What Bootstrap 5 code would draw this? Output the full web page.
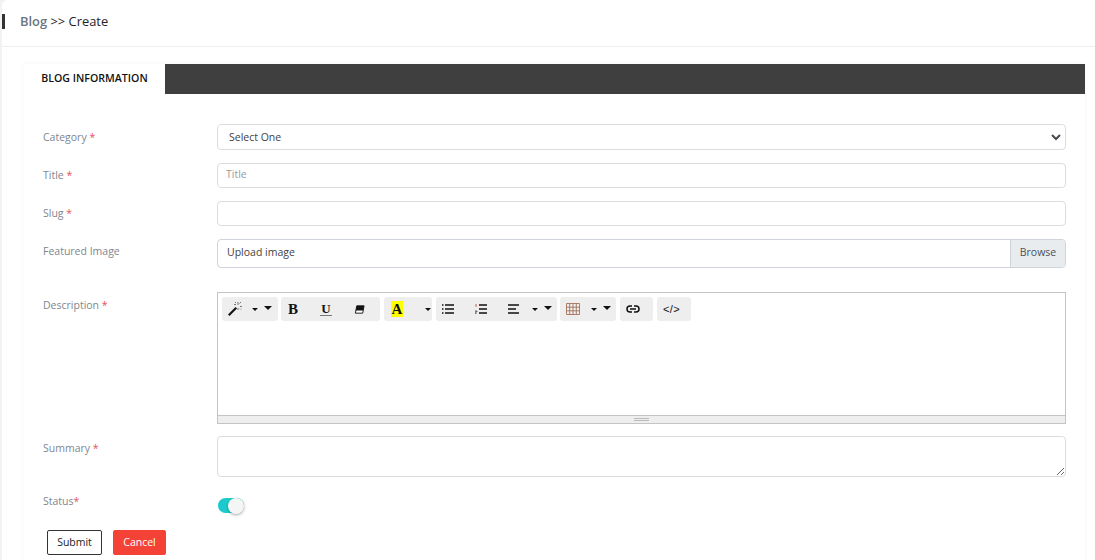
<!DOCTYPE html>
<html lang="en">
<head>
<meta charset="utf-8">
<title>Blog Create</title>
<link href="https://cdn.jsdelivr.net/npm/bootstrap@5.3.0/dist/css/bootstrap.min.css" rel="stylesheet">
<style>
html,body{height:560px;overflow:hidden}
body{background:#f2f2f2;font-family:"Open Sans",sans-serif;font-size:10.5px;color:#333;padding-left:2px}
.shell{background:#fff;border-top-left-radius:6px;height:560px;overflow:hidden}
.page-head{height:47px;border-bottom:1px solid #eee;padding-top:14px}
.head-mark{width:3px;height:15px;background:#333;margin-right:15px}
.crumb{font-size:12.9px;line-height:15px;color:#1f2328}
.crumb span{color:#6c757d;font-weight:600}
.panel{margin:17px 10px 0 22px;background:#fff;box-shadow:0 0 5px rgba(0,0,0,.04);height:560px}
.tab-bar{background:#3f3f3f;height:30px}
.tab-on{background:#fff;width:141px;text-align:center;font-size:10.6px;font-weight:600;color:#111;line-height:28px}
.form-body{padding:30px 19px 0 19px}
.frow{display:flex;margin-bottom:13px}
.flabel{width:174px;flex:none;color:#80868f;font-size:10.5px;line-height:24px}
.flabel-tall{line-height:26px}
.flabel b{color:#e8505b;font-weight:400}
.ffield{flex:1;min-width:0}
.fc{height:25px;font-size:10.5px;padding:0 8px 3px;border:1px solid #dcdcdc;border-radius:4px;color:#3f3f3f;box-shadow:none;display:block;width:100%;font-family:inherit}
.fc::placeholder{color:#9a9a9a}
select.fc{height:26px;padding:1px 8px 0 11px;background-image:url("data:image/svg+xml,%3Csvg xmlns='http://www.w3.org/2000/svg' viewBox='0 0 10 7'%3E%3Cpath d='M1 1l4 4 4-4' fill='none' stroke='%23444b52' stroke-width='2'/%3E%3C/svg%3E");background-size:10px 7px;background-position:right 4px center}
.file-box{height:29px;border:1px solid #ced4da;border-radius:4px;font-size:10.5px;overflow:hidden;margin-bottom:24px}
.file-name{flex:1;padding-left:9px;line-height:24px;color:#3f3f3f}
.file-btn{width:55px;background:#e9ecef;border-left:1px solid #ced4da;text-align:center;line-height:24px;color:#495057}
.ed{border:1px solid #c4c4c4;height:132px;display:flex;flex-direction:column;margin-bottom:12px}
.ed-top{flex:1;padding:4px 4px 0}
.tbgroup{height:24px;background:#eee;border-radius:3px;display:flex;align-items:center;flex:none;position:relative}
.tbgroup>*{flex:none}
.g-wand{width:56px;padding-left:5px}
.g-font{width:99px;margin-left:3px;padding-left:6px}
.g-color{width:48px;margin-left:4px;padding-left:7px}
.g-para{width:121px;margin-left:4px;padding-left:6px}
.g-table{width:56px;margin-left:3px;padding-left:6px}
.g-link{width:33px;margin-left:4px;padding-left:6px}
.g-code{width:34px;margin-left:4px;padding-left:6px}
.cap-b{font:700 15px 'Liberation Serif',serif;color:#111;width:12px;text-align:center}
.cap-u{font:700 13px/13px 'Liberation Serif',serif;color:#111;width:12px;text-align:center;margin-left:21px;border-bottom:1px solid #777}
.ic-eraser{margin-left:22px}
.cap-a{font:700 15px/16px 'Liberation Serif',serif;color:#111;background:#ff0;width:12px;text-align:center}
.gap-c1{margin-left:22px}
.ic-mid{margin-left:21px}
.cap-code{font:400 11px 'Liberation Sans',sans-serif;color:#111;letter-spacing:.4px}
.ed-grip{height:8px;background:#eee;border-top:1px solid #c4c4c4;display:flex;align-items:center;justify-content:center}
.grip-mark{width:15px;height:3px;border-top:1px solid #bbb;border-bottom:1px solid #bbb}
.caret-s{width:0;height:0;border-left:3px solid transparent;border-right:3px solid transparent;border-top:3px solid #111}
.caret-w{width:0;height:0;border-left:4px solid transparent;border-right:4px solid transparent;border-top:4px solid #111;margin-left:6px;margin-top:-2px}
.gap-w{margin-left:9px}
.gap-t{margin-left:11px}
.gap-p{margin-left:13px}
.ta{height:41px;resize:vertical;padding:4px 8px}
.status-row{margin-top:12px}
.toggle{width:26px;height:15px;border-radius:8px;background:linear-gradient(90deg,#1bc7cf,#22d6c2);position:relative;margin-top:9px;margin-left:1px}
.knob{width:16px;height:16px;background:#f4f6f6;border-radius:50%;position:absolute;right:0;top:0;box-shadow:0 1px 3px rgba(0,0,0,.35)}
.btnrow{margin-left:4px;margin-top:17px;gap:11px}
.btn-sub,.btn-can{height:25px;font-size:10.5px;padding:0;line-height:23px;border-radius:2px}
.btn-sub{width:55px;border:1px solid #333;background:#fff;color:#222}
.btn-can{width:53px;border:1px solid #f44336;background:#f44336;color:#fff}
</style>
</head>
<body>
<div class="shell">
  <div class="page-head d-flex align-items-start">
    <div class="head-mark"></div>
    <div class="crumb"><span>Blog</span> &gt;&gt; Create</div>
  </div>
  <div class="panel">
    <div class="tab-bar d-flex"><div class="tab-on">BLOG INFORMATION</div></div>
    <form class="form-body">
      <div class="frow">
        <div class="flabel flabel-tall">Category <b>*</b></div>
        <div class="ffield"><select class="form-select fc"><option>Select One</option></select></div>
      </div>
      <div class="frow">
        <div class="flabel">Title <b>*</b></div>
        <div class="ffield"><input class="form-control fc" placeholder="Title"></div>
      </div>
      <div class="frow">
        <div class="flabel">Slug <b>*</b></div>
        <div class="ffield"><input class="form-control fc"></div>
      </div>
      <div class="frow mb-0">
        <div class="flabel">Featured Image</div>
        <div class="ffield"><div class="file-box d-flex"><div class="file-name">Upload image</div><div class="file-btn">Browse</div></div></div>
      </div>
      <div class="frow mb-0">
        <div class="flabel flabel-tall">Description <b>*</b></div>
        <div class="ffield">
          <div class="ed">
            <div class="ed-top d-flex align-items-start">
              <div class="tbgroup g-wand">
                <svg width="16" height="16" viewBox="0 0 16 16"><path d="M1 13.500 8.500 6l1.500 1.500L2.500 15z" fill="#111"/><path d="M11 1v3M11 7v2M7 3.500h2M13 5.500h2M8 1l1 1M14 1l-1.500 1.500M14 8.500l-1-1" stroke="#777" stroke-width="1"/></svg>
                <span class="caret-s gap-w"></span><span class="caret-w"></span>
              </div>
              <div class="tbgroup g-font">
                <span class="cap-b">B</span>
                <span class="cap-u">U</span>
                <svg class="ic-eraser" width="11" height="11" viewBox="0 0 12 12"><path d="M3 2h8L9.500 10H1.500z" fill="#fff" stroke="#111"/><path d="M3 2h8L10 7H2z" fill="#111"/></svg>
              </div>
              <div class="tbgroup g-color">
                <span class="cap-a">A</span>
                <span class="caret-s gap-c1"></span>
              </div>
              <div class="tbgroup g-para">
                <svg width="12" height="10" viewBox="0 0 12 10"><path d="M3 1h9M3 5h9M3 9h9M0 1h1.500M0 5h1.500M0 9h1.500" stroke="#111" stroke-width="1.500"/></svg>
                <svg class="ic-mid" width="12" height="10" viewBox="0 0 12 10"><path d="M4 1h8M4 5h8M4 9h8" stroke="#111" stroke-width="1.500"/><path d="M1 0v3" stroke="#c33" stroke-width=".8"/><path d="M0 7h2v1H0v2h2" stroke="#333" stroke-width=".7" fill="none"/></svg>
                <svg class="ic-mid" width="11" height="10" viewBox="0 0 11 10"><path d="M0 1h11M0 5h8M0 9h11" stroke="#111" stroke-width="1.500"/></svg>
                <span class="caret-s gap-p"></span><span class="caret-w"></span>
              </div>
              <div class="tbgroup g-table">
                <svg width="14" height="12" viewBox="0 0 14 12"><path d="M.5.500h13v11H.500zM.5 4.200h13M.5 7.800h13M3.700.500v11M7 .500v11M10.300.500v11" fill="none" stroke="#a5705a" stroke-width=".9"/></svg>
                <span class="caret-s gap-t"></span><span class="caret-w"></span>
              </div>
              <div class="tbgroup g-link">
                <svg width="14" height="8" viewBox="0 0 14 8"><path d="M6 1H4a3 3 0 0 0 0 6h2M8 1h2a3 3 0 0 1 0 6H8M4 4h6" fill="none" stroke="#111" stroke-width="1.500"/></svg>
              </div>
              <div class="tbgroup g-code">
                <span class="cap-code">&lt;/&gt;</span>
              </div>
            </div>
            <div class="ed-grip"><div class="grip-mark"></div></div>
          </div>
        </div>
      </div>
      <div class="frow mb-0">
        <div class="flabel">Summary <b>*</b></div>
        <div class="ffield"><textarea class="form-control fc ta"></textarea></div>
      </div>
      <div class="frow mb-0 status-row">
        <div class="flabel">Status<b>*</b></div>
        <div class="ffield"><div class="toggle"><div class="knob"></div></div></div>
      </div>
      <div class="btnrow d-flex">
        <button type="button" class="btn btn-sub">Submit</button>
        <button type="button" class="btn btn-can">Cancel</button>
      </div>
    </form>
  </div>
</div>
<script src="https://cdn.jsdelivr.net/npm/bootstrap@5.3.0/dist/js/bootstrap.bundle.min.js"></script>
</body>
</html>
